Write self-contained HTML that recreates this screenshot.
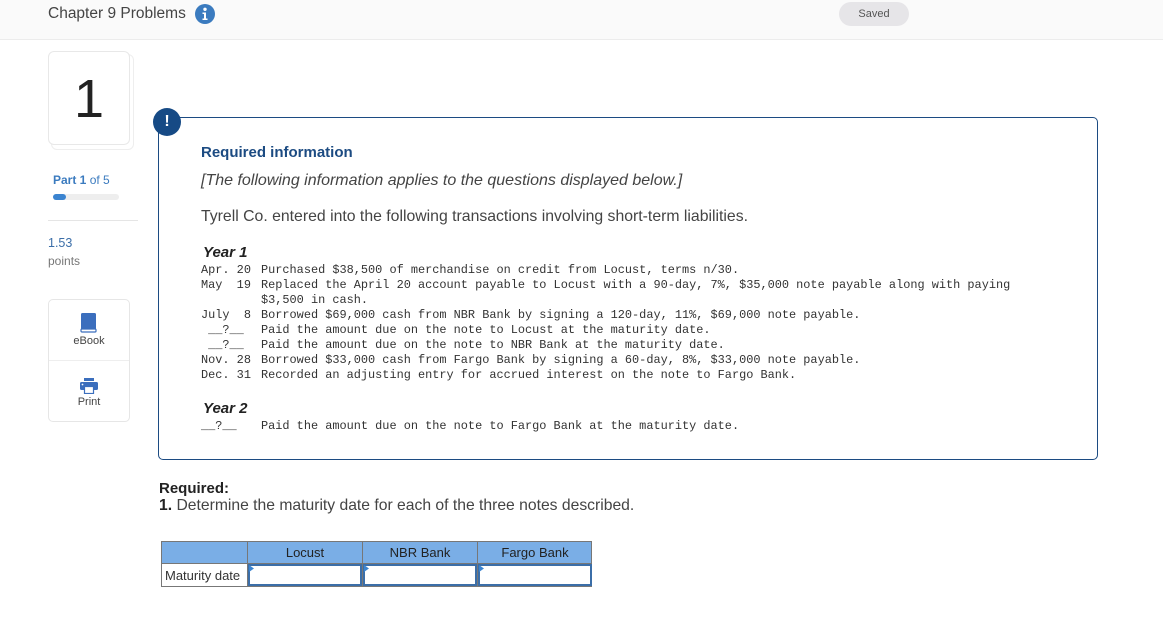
<!DOCTYPE html>
<html><head><meta charset="utf-8">
<style>
*{margin:0;padding:0;box-sizing:border-box}
body{width:1163px;height:619px;background:#fff;font-family:"Liberation Sans",sans-serif;color:#333;position:relative;overflow:hidden}
.a{position:absolute;white-space:nowrap}
.mono{font-family:"Liberation Mono",monospace;font-size:11.9px;color:#333;line-height:15px;white-space:pre}
</style></head><body>
<div class="a" style="left:0;top:0;width:1163px;height:40px;background:#fafafa;border-bottom:1px solid #ececec"></div>
<div class="a" style="left:48px;top:5px;font-size:15.5px;color:#444">Chapter 9 Problems</div>
<svg class="a" style="left:195px;top:4px" width="20" height="20" viewBox="0 0 20 20"><circle cx="10" cy="10" r="10" fill="#3b7bbf"/><circle cx="10" cy="5.3" r="1.7" fill="#fff"/><path d="M7.5 8.5h3.5v6h1.5v1.5h-5v-1.5h1.5v-4.5h-1.5z" fill="#fff"/></svg>
<div class="a" style="left:839px;top:2px;width:70px;height:24px;border-radius:12px;background:#e6e5e8;font-size:11px;color:#555;text-align:center;line-height:24px">Saved</div>

<div class="a" style="left:51px;top:54px;width:83px;height:96px;border:1px solid #eee;border-radius:6px"></div>
<div class="a" style="left:48px;top:51px;width:82px;height:94px;border:1px solid #e8e8e8;border-radius:6px;background:#fff;text-align:center;font-size:54px;line-height:94px;color:#222">1</div>

<div class="a" style="left:53px;top:173px;font-size:12px;color:#3b7bbf"><b>Part 1</b> of 5</div>
<div class="a" style="left:53px;top:194px;width:66px;height:6px;border-radius:3px;background:#eee"></div>
<div class="a" style="left:53px;top:194px;width:13px;height:6px;border-radius:3px;background:#3b84d0"></div>
<div class="a" style="left:48px;top:220px;width:90px;height:1px;background:#e5e5e5"></div>
<div class="a" style="left:48px;top:236px;font-size:12.5px;color:#3b6ea8">1.53</div>
<div class="a" style="left:48px;top:254px;font-size:12px;color:#777">points</div>

<div class="a" style="left:48px;top:299px;width:82px;height:123px;border:1px solid #e6e6e6;border-radius:5px"></div>
<div class="a" style="left:49px;top:360px;width:80px;height:1px;background:#eee"></div>
<svg class="a" style="left:80px;top:313px" width="18" height="20" viewBox="0 0 18 20"><rect x="1" y="0" width="15" height="17" rx="1.5" fill="#3b6ebd"/><rect x="1" y="16" width="15" height="3" rx="1" fill="#fff" stroke="#3b6ebd" stroke-width="1.2"/></svg>
<div class="a" style="left:48px;top:335px;width:82px;text-align:center;font-size:11px;color:#444">eBook</div>
<svg class="a" style="left:80px;top:378px" width="18" height="16" viewBox="0 0 18 16"><rect x="4" y="0" width="10" height="3" fill="#3b6ebd"/><rect x="0" y="4" width="18" height="8" rx="1.5" fill="#3b6ebd"/><rect x="4.5" y="8.5" width="9" height="7" fill="#fff" stroke="#3b6ebd" stroke-width="1.2"/><circle cx="2.5" cy="6.5" r="0.9" fill="#fff"/></svg>
<div class="a" style="left:48px;top:396px;width:82px;text-align:center;font-size:11px;color:#444">Print</div>

<div class="a" style="left:158px;top:117px;width:940px;height:343px;border:1px solid #1c4b82;border-radius:0 5px 5px 5px"></div>
<div class="a" style="left:153px;top:108px;width:28px;height:28px;border-radius:50%;background:#164a85;color:#fff;font-weight:bold;font-size:16px;text-align:center;line-height:28px">!</div>
<div class="a" style="left:201px;top:144px;font-size:15px;font-weight:bold;color:#1c4b82">Required information</div>
<div class="a" style="left:201px;top:172px;font-size:16px;font-style:italic;color:#444">[The following information applies to the questions displayed below.]</div>
<div class="a" style="left:201px;top:208px;font-size:15.8px;color:#444">Tyrell Co. entered into the following transactions involving short-term liabilities.</div>
<div class="a" style="left:203px;top:244px;font-size:15px;font-weight:bold;font-style:italic;color:#222">Year 1</div>
<div class="a mono" style="left:201px;top:263px">Apr. 20
May  19

July  8
 __?__
 __?__
Nov. 28
Dec. 31</div>
<div class="a mono" style="left:261px;top:263px">Purchased $38,500 of merchandise on credit from Locust, terms n/30.
Replaced the April 20 account payable to Locust with a 90-day, 7%, $35,000 note payable along with paying
$3,500 in cash.
Borrowed $69,000 cash from NBR Bank by signing a 120-day, 11%, $69,000 note payable.
Paid the amount due on the note to Locust at the maturity date.
Paid the amount due on the note to NBR Bank at the maturity date.
Borrowed $33,000 cash from Fargo Bank by signing a 60-day, 8%, $33,000 note payable.
Recorded an adjusting entry for accrued interest on the note to Fargo Bank.</div>
<div class="a" style="left:203px;top:400px;font-size:15px;font-weight:bold;font-style:italic;color:#222">Year 2</div>
<div class="a mono" style="left:201px;top:419px">__?__</div>
<div class="a mono" style="left:261px;top:419px">Paid the amount due on the note to Fargo Bank at the maturity date.</div>

<div class="a" style="left:159px;top:480px;font-size:15px;font-weight:bold;color:#222">Required:</div>
<div class="a" style="left:159px;top:497px;font-size:15.7px;color:#444"><b style="color:#222">1.</b> Determine the maturity date for each of the three notes described.</div>

<div class="a" style="left:161px;top:541px;width:431px;height:46px;border:1px solid #777;background:#fff"></div>
<div class="a" style="left:162px;top:542px;width:429px;height:22px;background:#7aaee6;border-bottom:1px solid #777"></div>
<div class="a" style="left:247px;top:542px;width:1px;height:44px;background:#777"></div>
<div class="a" style="left:362px;top:542px;width:1px;height:44px;background:#777"></div>
<div class="a" style="left:477px;top:542px;width:1px;height:44px;background:#777"></div>
<div class="a" style="left:248px;top:545px;width:114px;text-align:center;font-size:13px;color:#222">Locust</div>
<div class="a" style="left:363px;top:545px;width:114px;text-align:center;font-size:13px;color:#222">NBR Bank</div>
<div class="a" style="left:478px;top:545px;width:114px;text-align:center;font-size:13px;color:#222">Fargo Bank</div>
<div class="a" style="left:165px;top:568px;font-size:13px;color:#333">Maturity date</div>
<div class="a" style="left:248px;top:564px;width:114px;height:22px;border:2px solid #3b6ea8"></div>
<div class="a" style="left:363px;top:564px;width:114px;height:22px;border:2px solid #3b6ea8"></div>
<div class="a" style="left:478px;top:564px;width:114px;height:22px;border:2px solid #3b6ea8"></div>
<svg class="a" style="left:249px;top:565px" width="6" height="7"><path d="M0 0L5 3.5L0 7z" fill="#3b84d0"/></svg>
<svg class="a" style="left:364px;top:565px" width="6" height="7"><path d="M0 0L5 3.5L0 7z" fill="#3b84d0"/></svg>
<svg class="a" style="left:479px;top:565px" width="6" height="7"><path d="M0 0L5 3.5L0 7z" fill="#3b84d0"/></svg>
</body></html>
